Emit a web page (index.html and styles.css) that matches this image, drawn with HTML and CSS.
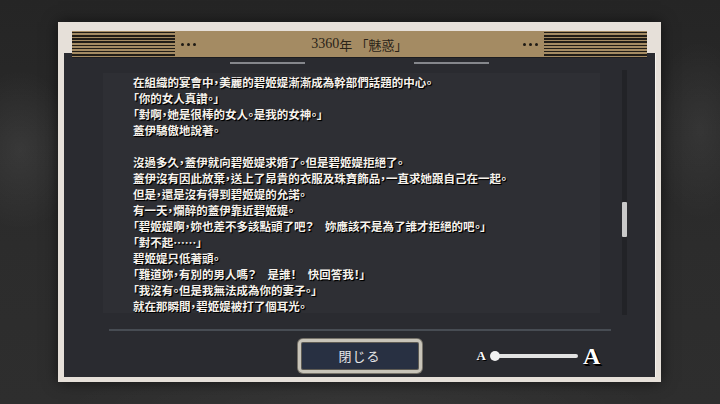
FILE: index.html
```html
<!DOCTYPE html>
<html lang="zh-Hant">
<head>
<meta charset="utf-8">
<title>3360年 「魅惑」</title>
<link rel="stylesheet" href="styles.css">
</head>
<body>
<div class="stage">
  <div class="frame">
    <div class="header">
      <div class="stripes"></div>
      <div class="dots"><span></span><span></span><span></span></div>
      <div class="title"><span class="num">3360</span>年 「魅惑」</div>
      <div class="dots"><span></span><span></span><span></span></div>
      <div class="stripes"></div>
    </div>
    <div class="panel">
      <div class="tabs"><span class="tab"></span><span class="tab"></span></div>
      <div class="content">
        <div class="textbox">
          <div class="line">在組織的宴會中，美麗的碧姬媞漸漸成為幹部們話題的中心。</div>
          <div class="line">「你的女人真讚。」</div>
          <div class="line">「對啊，她是很棒的女人。是我的女神。」</div>
          <div class="line">蓋伊驕傲地說著。</div>
          <div class="line blank"></div>
          <div class="line">沒過多久，蓋伊就向碧姬媞求婚了。但是碧姬媞拒絕了。</div>
          <div class="line">蓋伊沒有因此放棄，送上了昂貴的衣服及珠寶飾品，一直求她跟自己在一起。</div>
          <div class="line">但是，還是沒有得到碧姬媞的允諾。</div>
          <div class="line">有一天，爛醉的蓋伊靠近碧姬媞。</div>
          <div class="line">「碧姬媞啊，妳也差不多該點頭了吧？　妳應該不是為了誰才拒絕的吧。」</div>
          <div class="line">「對不起……」</div>
          <div class="line">碧姬媞只低著頭。</div>
          <div class="line">「難道妳，有別的男人嗎？　是誰！　快回答我！」</div>
          <div class="line">「我沒有。但是我無法成為你的妻子。」</div>
          <div class="line">就在那瞬間，碧姬媞被打了個耳光。</div>
        </div>
        <div class="scrolltrack"><div class="thumb"></div></div>
      </div>
      <div class="separator"></div>
      <div class="footer">
        <div></div>
        <button class="close">閉じる</button>
        <div class="slider">
          <span class="a-small">A</span>
          <span class="knob"></span>
          <span class="bar"></span>
          <span class="a-big">A</span>
        </div>
      </div>
    </div>
  </div>
</div>
</body>
</html>
```
FILE: styles.css
```css
html, body {
  margin: 0;
  padding: 0;
}
body {
  width: 720px;
  height: 404px;
  overflow: hidden;
  background-color: #2a2a2a;
  background-image:
    radial-gradient(ellipse 60px 80px at 20px 150px, rgba(255,255,255,0.07), rgba(255,255,255,0) 100%),
    radial-gradient(ellipse 50px 90px at 700px 130px, rgba(255,255,255,0.06), rgba(255,255,255,0) 100%),
    radial-gradient(ellipse 300px 40px at 360px 404px, rgba(255,255,255,0.04), rgba(255,255,255,0) 100%),
    linear-gradient(to bottom, #252525, #2c2c2c 60%, #2e2e2e);
  font-family: "Noto Sans CJK TC", "Noto Sans", sans-serif;
}
.stage {
  box-sizing: border-box;
  width: 720px;
  height: 404px;
  padding: 22px 0 0 58px;
}
.frame {
  box-sizing: border-box;
  width: 603px;
  height: 360px;
  background: #e6e0d9;
  padding: 9px 5px 5px 6px;
  display: flex;
  flex-direction: column;
  box-shadow: 0 0 14px rgba(0,0,0,0.55);
}
.header {
  position: relative;
  z-index: 1;
  height: 26px;
  margin: 0 9px 0 8px;
  background: #a48b63;
  display: flex;
  align-items: stretch;
  box-shadow: 0 1px 0 #1c1d20;
}
.stripes {
  width: 103px;
  flex: none;
  margin-top: 1px;
  background: repeating-linear-gradient(to bottom, #211d17 0, #211d17 1.5px, #a48b63 1.5px, #a48b63 3.15px);
}
.dots {
  display: flex;
  align-items: center;
  gap: 3px;
  margin: 0 6px;
}
.dots span {
  width: 3px;
  height: 3px;
  border-radius: 50%;
  background: #1e1a14;
}
.title {
  flex: 1;
  display: flex;
  align-items: center;
  justify-content: center;
  color: #2a2318;
  font-size: 13px;
  font-family: "Liberation Serif", "Noto Sans CJK TC", serif;
  letter-spacing: 0;
}
.title .num {
  font-size: 14px;
}
.panel {
  flex: 1;
  margin-top: -4px;
  background: #2a2b30;
  border-right: 1px solid #f4f1ec;
  display: flex;
  flex-direction: column;
}
.tabs {
  margin-top: 9px;
  height: 2px;
  display: flex;
  justify-content: center;
  gap: 109px;
}
.tab {
  width: 75px;
  height: 1.5px;
  background: #85878c;
}
.content {
  margin-top: 9px;
  padding-left: 39px;
  display: flex;
  align-items: flex-start;
}
.textbox {
  box-sizing: border-box;
  width: 497px;
  height: 240px;
  overflow: hidden;
  background: #2e2f34;
  padding: 1px 0 0 30px;
  color: #f6f2ec;
  font-size: 11.5px;
  line-height: 16px;
  font-weight: 700;
  font-feature-settings: "palt";
  text-shadow: 1px 1px 0 #000, 1px 1px 1px #000;
  white-space: nowrap;
}
.line.blank {
  height: 16px;
}
.scrolltrack {
  margin-left: 22px;
  margin-top: -3px;
  width: 5px;
  height: 245px;
  background: #222327;
}
.thumb {
  margin-top: 132px;
  height: 35px;
  background: #c9c9c9;
  border-radius: 1px;
}
.separator {
  margin: 14px 0 0 45px;
  width: 502px;
  height: 1.5px;
  background: #474c53;
}
.footer {
  margin-top: 8px;
  display: grid;
  grid-template-columns: 1fr auto 1fr;
  align-items: center;
}
.close {
  box-sizing: border-box;
  width: 124px;
  height: 34px;
  border: 3px solid #c8c4b9;
  border-radius: 5px;
  background: #283042;
  color: #e6e6e8;
  font-family: "Noto Sans CJK JP", sans-serif;
  font-size: 13px;
  letter-spacing: 1px;
  padding: 0;
  box-shadow: inset 0 0 0 1px #5e5b54, 0 0 0 1px #77736a;
}
.slider {
  display: flex;
  align-items: center;
  padding-left: 55px;
}
.a-small, .a-big {
  font-family: "Liberation Serif", serif;
  font-weight: 700;
  color: #ffffff;
}
.a-small {
  font-size: 13px;
  line-height: 13px;
  text-shadow: 1px 1px 0 #000;
}
.a-big {
  font-size: 24px;
  line-height: 24px;
  margin-left: 5px;
  text-shadow: 1px 1px 0 #000, 2px 2px 0 #000;
}
.knob {
  width: 10px;
  height: 10px;
  border-radius: 50%;
  background: #f2f2f2;
  margin-left: 4px;
  position: relative;
  z-index: 1;
}
.bar {
  width: 80px;
  height: 4px;
  border-radius: 2px;
  background: #e2e2e2;
  margin-left: -2px;
}
```
